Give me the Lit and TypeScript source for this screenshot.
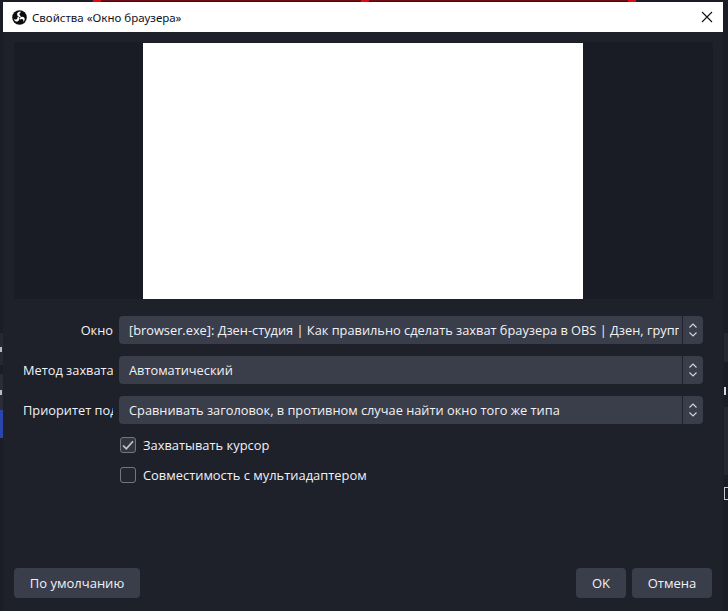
import { LitElement, html, css } from "lit";
import { customElement } from "lit/decorators.js";

const chevrons = html`<svg class="chev" width="12" height="18" viewBox="0 0 12 18" fill="none" stroke="#d4d6dc" stroke-width="1.1"><path d="M2.5 6.5 6 3l3.5 3.5"/><path d="M2.5 11.5 6 15l3.5-3.5"/></svg>`;
const blade = "M17 15.500C12.500 14.500 10 11 11 7.500C12 4.500 16 3 20 4.200C17 5 15.500 7 16 9.500C16.500 11.500 18 12.500 19.500 12.800Z";

@customElement("app-root")
export class AppRoot extends LitElement {
  static styles = css`
    :host { display: block; width: 728px; height: 611px; overflow: hidden; background: #1c1e27; font-family: "Open Sans", "Noto Sans", sans-serif; font-size: 12.8px; color: #f1f2f5; }
    .page { display: grid; grid-template-columns: 3px 720px 5px; height: 611px; }
    .strip { display: flex; flex-direction: column; background: #1b1d26; overflow: hidden; }
    .sl1 { height: 32px; margin-top: 333px; background: #262832; display: flex; align-items: center; }
    .sl2 { height: 36px; margin-top: 9px; background: #2a2c37; display: flex; align-items: center; }
    .sl3 { height: 28px; background: #2a46ac; }
    .mark { width: 2px; height: 5px; background: #b9bbc2; }
    .sr1 { height: 29px; margin-top: 333px; margin-left: 1px; background: #252731; }
    .sr2 { height: 8px; margin-top: 25px; margin-left: 1px; background: #d8d9de; width: 2px; }
    .sr3 { height: 68px; margin-top: 12px; margin-left: 1px; background: #252731; }
    .sr4 { height: 13px; margin-top: 12px; margin-left: 1px; width: 4px; border: 1px solid #c9cad0; border-right: 0; box-sizing: border-box; }
    .top { height: 2px; background: #1b1d26; display: flex; align-items: flex-start; }
    .redline { height: 1px; background: #6b0f14; flex: 1; }
    .redmark { width: 8px; height: 2px; background: #e00b12; }
    .off { width: 90px; }
    .offr { width: 87px; }
    .win { display: flex; flex-direction: column; height: 609px; }
    .title { height: 30px; flex: none; background: #fff; color: #10131c; display: flex; align-items: center; font-size: 11.5px; font-family: "Noto Sans", "Open Sans", sans-serif; padding-left: 9px; gap: 5px; }
    .title span { flex: 1; }
    .close { width: 12px; height: 12px; margin-right: 10px; }
    .body { flex: 1; display: flex; flex-direction: column; background: #1e202a; }
    .preview { height: 257px; flex: none; background: #191b25; margin: 10px 10px 0 11px; padding-top: 1px; padding-left: 129px; box-sizing: border-box; }
    .screen { width: 440px; height: 256px; background: #fff; }
    .form { padding: 17px 0 0 20px; display: grid; grid-template-columns: 90px 584px; grid-template-rows: 28px 28px 28px auto; column-gap: 6px; row-gap: 12px; align-items: center; }
    .label { text-align: right; white-space: nowrap; overflow: hidden; line-height: 28px; }
    .label.clip { text-align: left; }
    .select { height: 28px; background: #3a3d4a; border-radius: 4px; display: flex; align-items: center; overflow: hidden; }
    .value { flex: 1; min-width: 0; margin: 0 3px 0 10px; white-space: nowrap; overflow: hidden; }
    .arrow { width: 21px; height: 28px; flex: none; display: flex; align-items: center; justify-content: center; border-left: 1px solid #1f212b; box-sizing: border-box; }
    .checks { grid-column: 2; display: flex; flex-direction: column; gap: 14px; margin-top: 1px; font-size: 12.9px; }
    .checkrow { display: flex; align-items: center; gap: 7px; height: 16px; padding-left: 1px; }
    .box { width: 16px; height: 16px; flex: none; box-sizing: border-box; border: 1.5px solid #74767f; border-radius: 3px; background: #23252f; display: flex; align-items: center; justify-content: center; }
    .box.on { background: #34363f; }
    .foot { margin-top: auto; display: flex; align-items: center; padding: 0 11px 13px 11px; font-size: 13px; }
    .btn { height: 30px; background: #3a3d4a; border-radius: 4px; display: flex; align-items: center; justify-content: center; box-sizing: border-box; }
    .def { width: 126px; }
    .ok { width: 50px; margin-left: auto; }
    .cancel { width: 80px; margin-left: 6px; }
  `;

  private field(label: string, value: string, clip = false) {
    return html`
      <div class="label ${clip ? "clip" : ""}">${label}</div>
      <div class="select"><div class="value">${value}</div><div class="arrow">${chevrons}</div></div>
    `;
  }

  render() {
    return html`
      <div class="page">
        <div class="strip"><div class="sl1"><div class="mark"></div></div><div class="sl2"><div class="mark"></div></div><div class="sl3"></div></div>
        <div>
          <div class="top">
            <div class="off"></div><div class="redmark"></div><div class="redline"></div><div class="redmark"></div><div class="redline"></div><div class="redmark"></div><div class="offr"></div>
          </div>
          <div class="win">
            <div class="title">
              <svg width="15" height="15" viewBox="0 0 32 32">
                <circle cx="16" cy="16" r="15.5" fill="#0c0c0c"/>
                <g fill="#fff">
                  <path d=${blade}/>
                  <path d=${blade} transform="rotate(120 16 16)"/>
                  <path d=${blade} transform="rotate(240 16 16)"/>
                </g>
              </svg>
              <span>Свойства «Окно браузера»</span>
              <svg class="close" viewBox="0 0 12 12" stroke="#111" stroke-width="1.1"><path d="M1 1l10 10M11 1 1 11"/></svg>
            </div>
            <div class="body">
              <div class="preview"><div class="screen"></div></div>
              <div class="form">
                ${this.field("Окно", "[browser.exe]: Дзен-студия | Как правильно сделать захват браузера в OBS | Дзен, группа")}
                ${this.field("Метод захвата", "Автоматический")}
                ${this.field("Приоритет подбора окна", "Сравнивать заголовок, в противном случае найти окно того же типа", true)}
                <div class="checks">
                  <div class="checkrow">
                    <div class="box on"><svg width="12" height="10" viewBox="0 0 12 10" fill="none" stroke="#c4c5cb" stroke-width="1.7"><path d="M1 5.500 4.300 8.700 11 1.200"/></svg></div>
                    <span>Захватывать курсор</span>
                  </div>
                  <div class="checkrow"><div class="box"></div><span>Совместимость с мультиадаптером</span></div>
                </div>
              </div>
              <div class="foot">
                <div class="btn def">По умолчанию</div>
                <div class="btn ok">OK</div>
                <div class="btn cancel">Отмена</div>
              </div>
            </div>
          </div>
        </div>
        <div class="strip"><div class="sr1"></div><div class="sr2"></div><div class="sr3"></div><div class="sr4"></div></div>
      </div>
    `;
  }
}
